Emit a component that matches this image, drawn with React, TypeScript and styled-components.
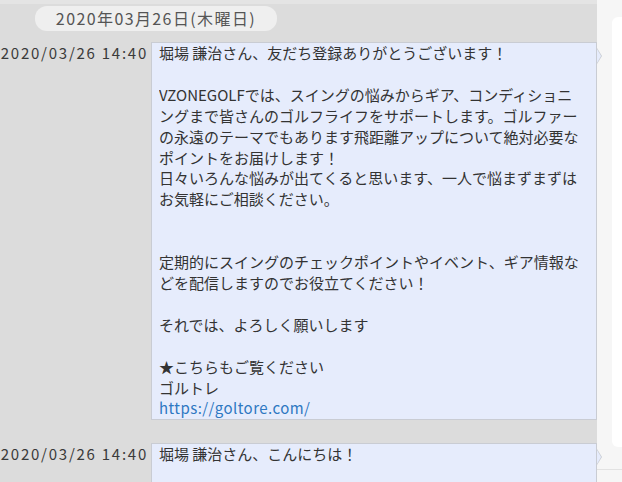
import React from "react";
import styled, { createGlobalStyle } from "styled-components";

const GlobalStyle = createGlobalStyle`
  html, body {
    margin: 0;
    padding: 0;
    overflow: hidden;
  }
  body {
    font-family: "Noto Sans CJK JP", "Noto Sans", sans-serif;
    color: #333;
  }
`;

const Screen = styled.div`
  display: flex;
  width: 622px;
  height: 482px;
  overflow: hidden;
`;

const ChatPanel = styled.div`
  width: 597px;
  flex-shrink: 0;
  background: #dcdcdc;
  border-top: 4px solid #e4e4e4;
  box-sizing: border-box;
  padding-top: 2px;
  display: flex;
  flex-direction: column;
`;

const DatePill = styled.div`
  margin-left: 35px;
  width: 242px;
  height: 25px;
  border-radius: 12px;
  background: #efefef;
  color: #555;
  font-size: 16px;
  line-height: 25px;
  text-align: center;
  letter-spacing: 1.4px;
`;

const MessageRow = styled.div<{ $gap: number }>`
  display: flex;
  align-items: flex-start;
  margin-top: ${(p) => p.$gap}px;
`;

const Time = styled.div`
  width: 148px;
  flex-shrink: 0;
  text-align: right;
  font-size: 15px;
  line-height: 20.9px;
  margin-top: 1px;
  color: #3a3a3a;
  letter-spacing: 1.75px;
  margin-right: -1px;
`;

const Bubble = styled.div`
  position: relative;
  margin-left: 4px;
  width: 437px;
  min-height: 40px;
  background: #e6ecfc;
  border: 1px solid #c9ccd3;
  padding: 0 0 0 7px;
  box-sizing: content-box;
  font-size: 15px;
  line-height: 20.9px;
  white-space: pre;
  color: #333;

  &::before {
    content: "";
    position: absolute;
    right: -6px;
    top: 5px;
    border-style: solid;
    border-width: 8px 0 8px 5px;
    border-color: transparent transparent transparent #c9ccd3;
  }

  &::after {
    content: "";
    position: absolute;
    right: -5px;
    top: 6px;
    border-style: solid;
    border-width: 7px 0 7px 4px;
    border-color: transparent transparent transparent #e6ecfc;
  }
`;

const BubbleText = styled.div`
  width: 430px;
  overflow: hidden;
`;

const Link = styled.a`
  color: #2e78c2;
  text-decoration: none;
  letter-spacing: 0.45px;
`;

const SidePanel = styled.div`
  flex: 1;
  background: #f6f6f6;
  padding-top: 17px;
  padding-left: 15px;
  display: flex;
  flex-direction: column;
`;

const Card = styled.div`
  height: 430px;
  background: #fff;
  border-radius: 6px 0 0 6px;
`;

const Divider = styled.div`
  margin-top: 22px;
  margin-left: -15px;
  height: 1px;
  background: #e2e2e2;
`;

const firstMessage = `堀場 謙治さん、友だち登録ありがとうございます！

VZONEGOLFでは、スイングの悩みからギア、コンディショニ
ングまで皆さんのゴルフライフをサポートします。ゴルファー
の永遠のテーマでもあります飛距離アップについて絶対必要な
ポイントをお届けします！
日々いろんな悩みが出てくると思います、一人で悩まずまずは
お気軽にご相談ください。


定期的にスイングのチェックポイントやイベント、ギア情報な
どを配信しますのでお役立てください！

それでは、よろしく願いします

★こちらもご覧ください
ゴルトレ
`;

const App: React.FC = () => {
  return (
    <>
      <GlobalStyle />
      <Screen>
        <ChatPanel>
          <DatePill>2020年03月26日(木曜日)</DatePill>
          <MessageRow $gap={11}>
            <Time>2020/03/26 14:40</Time>
            <Bubble>
              <BubbleText>
                {firstMessage}
                <Link href="#">https://goltore.com/</Link>
              </BubbleText>
            </Bubble>
          </MessageRow>
          <MessageRow $gap={23}>
            <Time>2020/03/26 14:40</Time>
            <Bubble>
              <BubbleText>{`堀場 謙治さん、こんにちは！\n\n`}</BubbleText>
            </Bubble>
          </MessageRow>
        </ChatPanel>
        <SidePanel>
          <Card />
          <Divider />
        </SidePanel>
      </Screen>
    </>
  );
};

export default App;
